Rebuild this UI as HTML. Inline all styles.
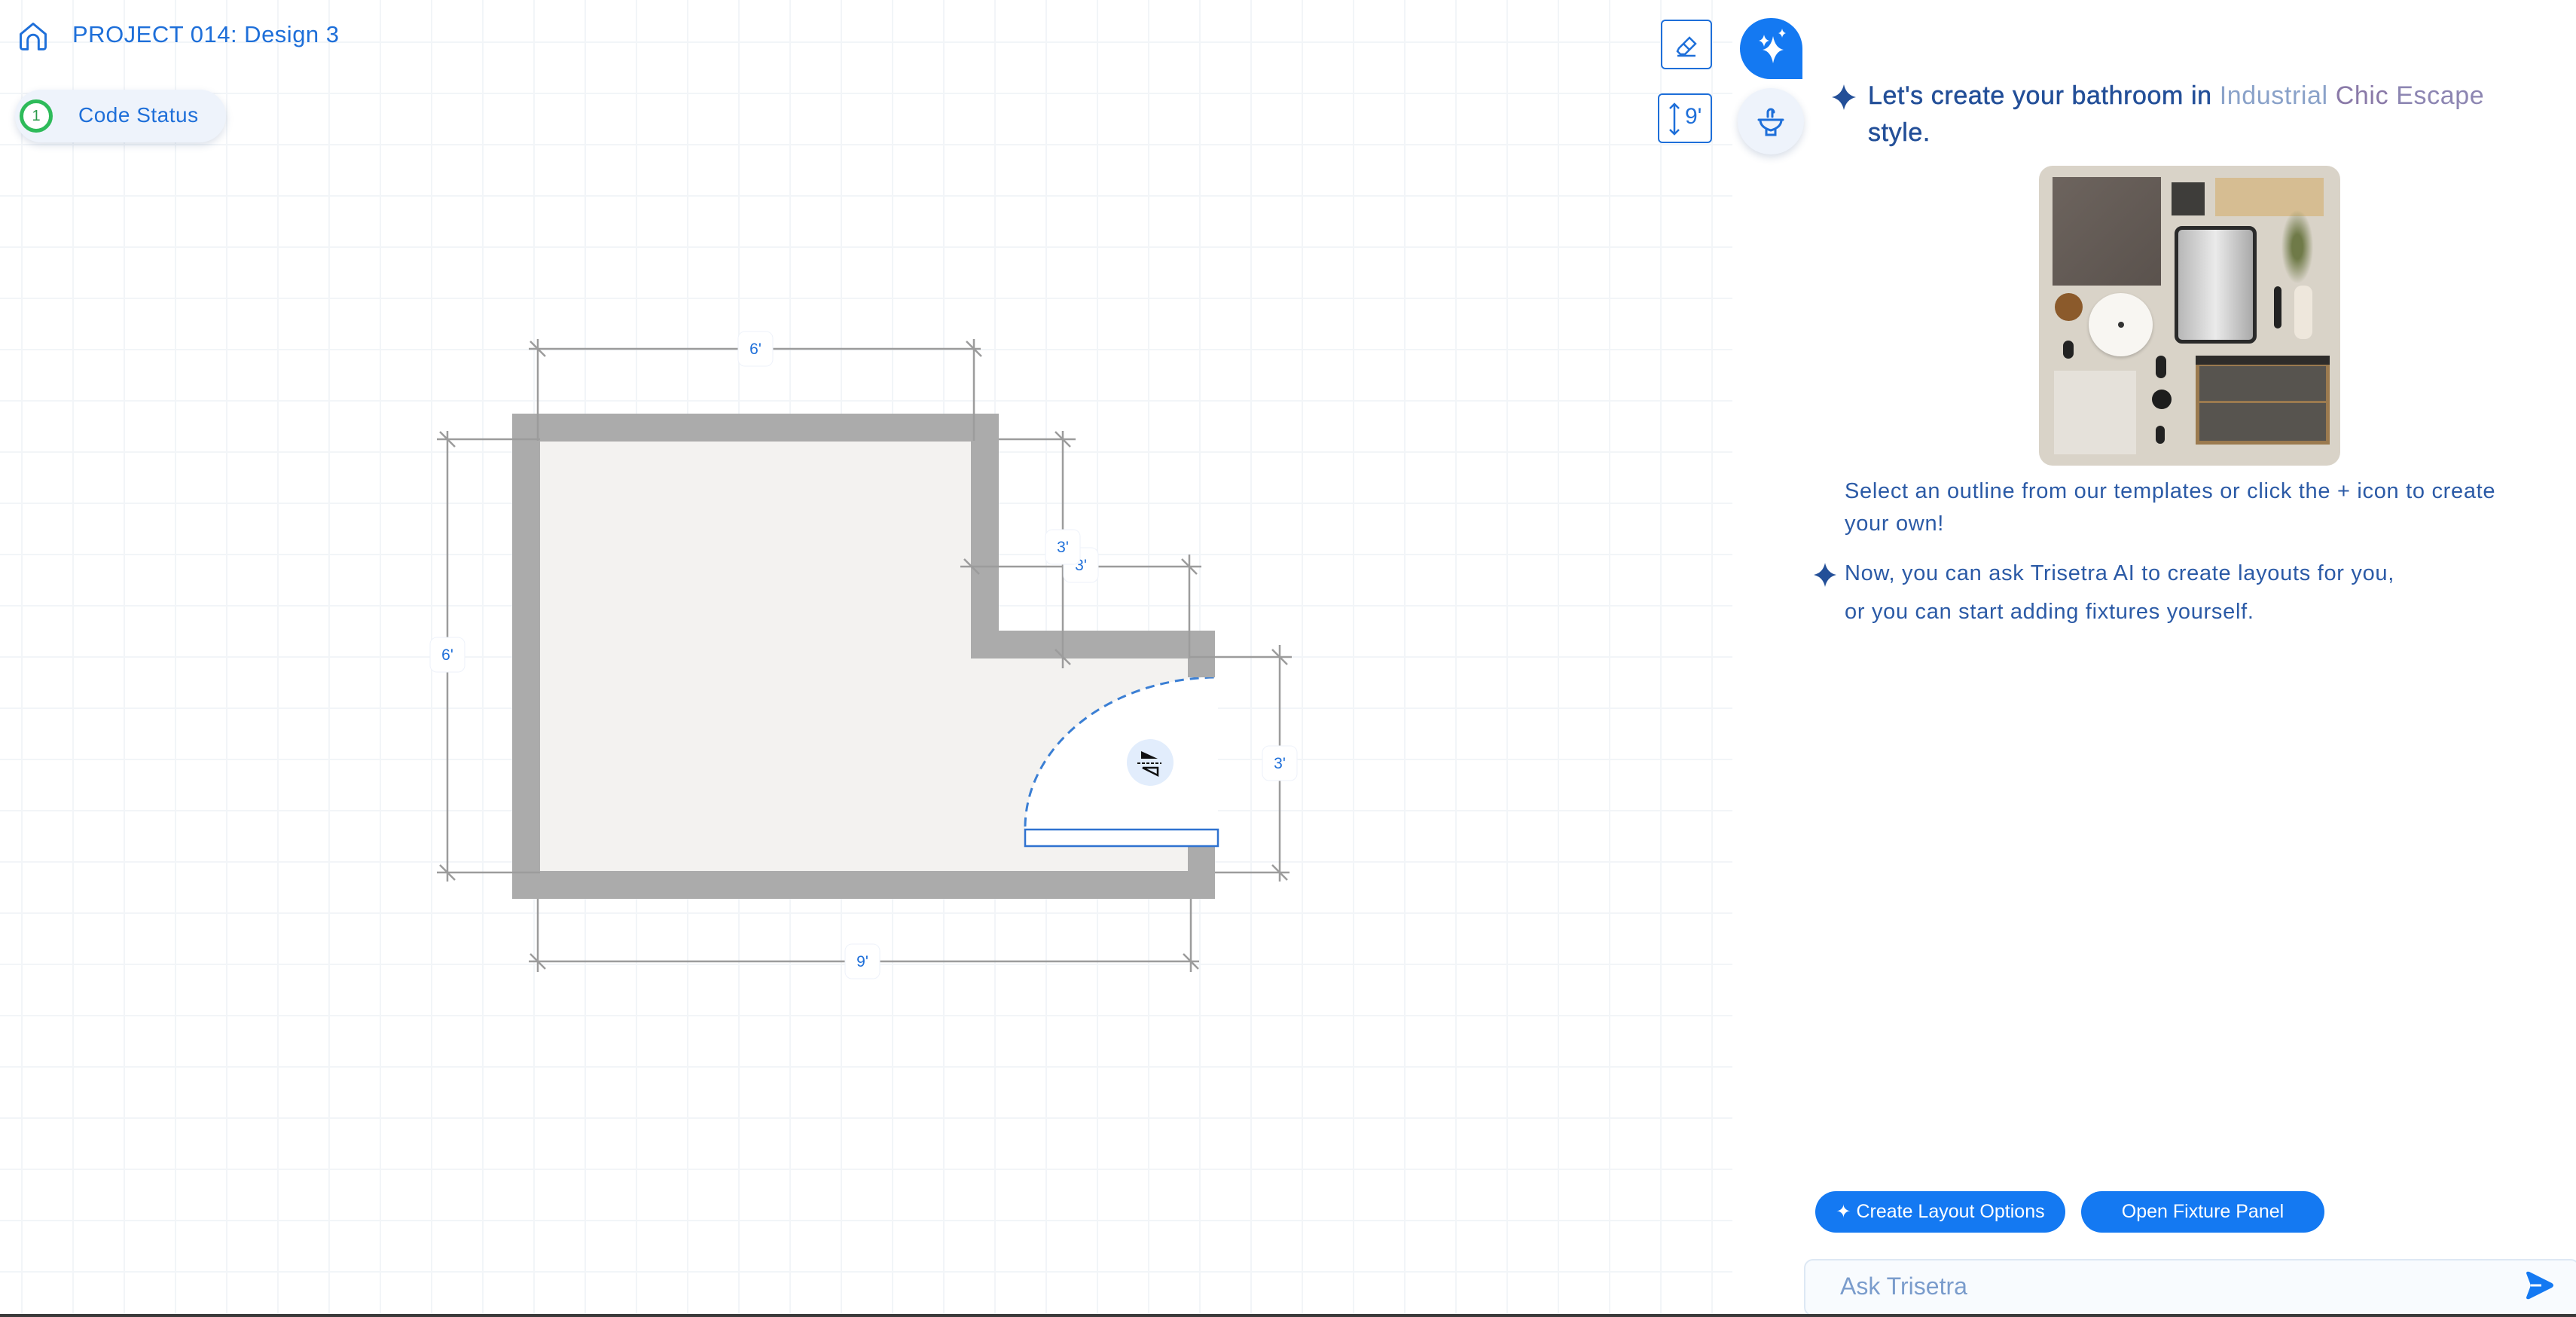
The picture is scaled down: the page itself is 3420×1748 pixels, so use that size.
<!DOCTYPE html>
<html><head><meta charset="utf-8">
<style>
*{margin:0;padding:0;box-sizing:border-box}
body{width:3420px;height:1748px;overflow:hidden;background:#fff;font-family:"Liberation Sans",sans-serif;position:relative}
.canvas{position:absolute;left:0;top:0;width:2300px;height:1748px;
background-image:linear-gradient(#f2f5f8 2px,transparent 2px),linear-gradient(90deg,#f2f5f8 2px,transparent 2px);
background-size:68px 68px;background-position:28px 55px}
.abs{position:absolute}
.title{left:96px;top:28px;font-size:31px;color:#1e6fd9;letter-spacing:0.5px}
.pill{left:20px;top:119px;width:280px;height:70px;border-radius:35px;background:#eef3fb;box-shadow:0 4px 10px rgba(60,90,140,.18)}
.pill .c{position:absolute;left:6px;top:13px;width:44px;height:44px;border:5px solid #2ebb5a;border-radius:50%;background:#fff;color:#2a9a4a;font-size:20px;text-align:center;line-height:34px}
.pill .t{position:absolute;left:84px;top:18px;font-size:28px;color:#1e6fd9;letter-spacing:0.5px}
.tbtn{border:2.5px solid #1e6fd9;border-radius:6px;background:#fff}
.rt{color:#234f98;font-size:34px;letter-spacing:0.6px;-webkit-text-stroke:0.5px #234f98}
.st{color:#2b5aa6;font-size:29px;letter-spacing:0.7px}
.btn{background:#1479f2;color:#fff;border-radius:28px;height:55px;font-size:25px;text-align:center;line-height:55px}
</style></head><body>
<div class="canvas"></div>
<svg class="abs" style="left:22px;top:26px" width="44" height="44" viewBox="0 0 24 24" fill="none" stroke="#1e6fd9" stroke-width="1.6" stroke-linejoin="round"><path d="M3 10.5L12 3l9 7.5V20a1.5 1.5 0 0 1-1.5 1.5H16V15a4 4 0 0 0-8 0v6.5H4.5A1.5 1.5 0 0 1 3 20z"/></svg>
<div class="abs title">PROJECT 014: Design 3</div>
<div class="abs pill"><div class="c">1</div><div class="t">Code Status</div></div>

<svg class="abs" style="left:0;top:0" width="2300" height="1748">
<g fill="#f3f2f0"><rect x="717" y="586" width="572" height="288"/><rect x="717" y="874" width="860" height="282"/></g>
<path d="M1617 1101 L1361 1101 A256 202 0 0 1 1617 899 Z" fill="#fff"/>
<path d="M1361 1097 A256 200 0 0 1 1617 899" fill="none" stroke="#3b7fd4" stroke-width="3" stroke-dasharray="12 8"/>
<g fill="#ababab">
<rect x="680" y="549" width="646" height="37"/><rect x="680" y="549" width="37" height="644"/>
<rect x="1289" y="549" width="37" height="325"/><rect x="1289" y="837" width="324" height="37"/>
<rect x="1577" y="837" width="36" height="62"/><rect x="1577" y="1123" width="36" height="70"/>
<rect x="680" y="1156" width="933" height="37"/></g>
<rect x="1361" y="1101" width="256" height="22" fill="#fff" stroke="#2f72d0" stroke-width="2.5"/>
<g stroke="#9c9c9c" stroke-width="2.5" fill="none">
<path d="M702 463H1302M714 450V585M1293 450V585"/>
<path d="M594 572V1170M580 583H717M580 1158H717"/>
<path d="M1411 572V887M1326 583H1428"/>
<path d="M1275 752H1595M1579 736V874"/>
<path d="M1699 856V1170M1579 872H1715M1613 1158H1712"/>
<path d="M702 1276H1592M714 1193V1290M1581 1193V1290"/>
<path d="M704 453l20 20M1283 453l20 20M584 573l20 20M584 1148l20 20M1401 573l20 20M1401 862l20 20M1280 742l20 20M1569 742l20 20M1689 862l20 20M1689 1148l20 20M704 1266l20 20M1571 1266l20 20"/>
</g>
<g font-family="Liberation Sans" font-size="21" fill="#1e6fd9" text-anchor="middle">
<g><rect x="980" y="440" width="46" height="46" rx="9" fill="#fff" stroke="#eef2fa"/><text x="1003" y="470">6'</text></g>
<g><rect x="571" y="846" width="46" height="46" rx="9" fill="#fff" stroke="#eef2fa"/><text x="594" y="876">6'</text></g>
<g><rect x="1412" y="727" width="46" height="46" rx="9" fill="#fff" stroke="#eef2fa"/><text x="1435" y="757">3'</text></g>
<g><rect x="1388" y="703" width="46" height="46" rx="9" fill="#fff" stroke="#eef2fa"/><text x="1411" y="733">3'</text></g>
<g><rect x="1676" y="990" width="46" height="46" rx="9" fill="#fff" stroke="#eef2fa"/><text x="1699" y="1020">3'</text></g>
<g><rect x="1122" y="1253" width="46" height="46" rx="9" fill="#fff" stroke="#eef2fa"/><text x="1145" y="1283">9'</text></g>
</g>
<circle cx="1527" cy="1012" r="31" fill="#e2edfc"/>
<path d="M1515 997l22 10h-22z" fill="#111"/><path d="M1510 1013h32" stroke="#111" stroke-width="2" stroke-dasharray="4 2"/><path d="M1517 1019l20 10v-10z" fill="none" stroke="#111" stroke-width="2.5"/>
</svg>

<div class="abs tbtn" style="left:2205px;top:26px;width:68px;height:66px">
<svg width="63" height="61" viewBox="0 0 63 61" fill="none" stroke="#1e6fd9" stroke-width="2.5"><path d="M22 36l14-14 8 8-14 14-6 0-4-4z M28 30l8 8 M20 46h24"/></svg></div>
<div class="abs tbtn" style="left:2201px;top:124px;width:72px;height:66px">
<svg class="abs" style="left:10px;top:10px" width="20" height="44" viewBox="0 0 20 44" fill="none" stroke="#1e6fd9" stroke-width="2.5"><path d="M10 2v40M4 8l6-6 6 6M4 36l6 6 6-6"/></svg>
<div class="abs" style="left:34px;top:12px;font-size:30px;color:#1e6fd9">9'</div></div>
<div class="abs" style="left:2310px;top:24px;width:83px;height:81px;background:#1479f2;border-radius:42px 42px 0 42px"></div>
<svg class="abs" style="left:2310px;top:24px" width="83" height="81" viewBox="0 0 83 81" fill="#fff"><path d="M44 24q3 16 14 18q-11 2-14 18q-3-16-14-18q11-2 14-18z"/><path d="M32 22q1.5 7 7 8q-5.5 1-7 8q-1.5-7-7-8q5.5-1 7-8z"/><path d="M56 14q1 5 5 6q-4 1-5 6q-1-5-5-6q4-1 5-6z"/></svg>
<div class="abs" style="left:2307px;top:117px;width:88px;height:88px;border-radius:50%;background:#eef3fb;box-shadow:0 4px 10px rgba(60,90,140,.2)"></div>
<svg class="abs" style="left:2327px;top:137px" width="48" height="48" viewBox="0 0 48 48" fill="none" stroke="#1e6fd9" stroke-width="3" stroke-linecap="round"><path d="M20 18v-6a4 4 0 0 1 8 0M26 10v8M8 22h32M10 22q0 10 14 14q14-4 14-14M18 34v8h12v-8"/></svg>

<svg class="abs" style="left:2432px;top:112px" width="32" height="34" viewBox="0 0 32 34"><path d="M16 0q3 14 16 17q-13 3-16 17q-3-14-16-17q13-3 16-17z" fill="#234f98"/></svg>
<div class="abs rt" style="left:2480px;top:108px">Let's create your bathroom in <span style="color:#8aa2c9;-webkit-text-stroke:0">Industrial </span><span style="color:#8a7aa8;-webkit-text-stroke:0">Chic </span><span style="color:#8d86b2;-webkit-text-stroke:0">Escape</span></div>
<div class="abs rt" style="left:2480px;top:157px">style.</div>

<div class="abs" style="left:2707px;top:220px;width:400px;height:398px;border-radius:18px;background:#d9d3c8;overflow:hidden">
<div class="abs" style="left:18px;top:15px;width:144px;height:144px;background:linear-gradient(135deg,#6d645e,#5a524d)"></div>
<div class="abs" style="left:176px;top:22px;width:44px;height:44px;background:#3e3d3a"></div>
<div class="abs" style="left:234px;top:16px;width:144px;height:51px;background:#d6bd92"></div>
<div class="abs" style="left:180px;top:80px;width:109px;height:156px;border:5px solid #2a2a2a;border-radius:10px;background:linear-gradient(90deg,#b7b7b7,#eaeaea,#a9a9a9)"></div>
<div class="abs" style="left:318px;top:50px;width:50px;height:115px;background:radial-gradient(ellipse at center,#6f7a48 20%,transparent 60%)"></div>
<div class="abs" style="left:339px;top:159px;width:24px;height:71px;border-radius:10px;background:#eee7dc"></div>
<div class="abs" style="left:21px;top:169px;width:37px;height:37px;border-radius:50%;background:#8b5a2b"></div>
<div class="abs" style="left:66px;top:169px;width:85px;height:84px;border-radius:50%;background:#f8f6f2;box-shadow:0 2px 4px rgba(0,0,0,.2)"></div>
<div class="abs" style="left:105px;top:207px;width:8px;height:8px;border-radius:50%;background:#333"></div>
<div class="abs" style="left:32px;top:232px;width:14px;height:24px;border-radius:7px;background:#222"></div>
<div class="abs" style="left:155px;top:252px;width:14px;height:30px;border-radius:7px;background:#222"></div>
<div class="abs" style="left:150px;top:297px;width:26px;height:26px;border-radius:50%;background:#1d1d1d"></div>
<div class="abs" style="left:155px;top:345px;width:12px;height:24px;border-radius:6px;background:#222"></div>
<div class="abs" style="left:312px;top:160px;width:10px;height:56px;border-radius:5px;background:#222"></div>
<div class="abs" style="left:20px;top:272px;width:109px;height:111px;background:#e5e1da"></div>
<div class="abs" style="left:208px;top:252px;width:178px;height:118px;background:#9b7a4f"></div>
<div class="abs" style="left:208px;top:252px;width:178px;height:12px;background:#2e2c2a"></div>
<div class="abs" style="left:213px;top:266px;width:168px;height:46px;background:#57544f"></div>
<div class="abs" style="left:213px;top:315px;width:168px;height:50px;background:#57544f"></div>
</div>

<div class="abs st" style="left:2449px;top:636px">Select an outline from our templates or click the + icon to create</div>
<div class="abs st" style="left:2449px;top:679px">your own!</div>
<svg class="abs" style="left:2408px;top:747px" width="30" height="32" viewBox="0 0 32 34"><path d="M16 0q3 14 16 17q-13 3-16 17q-3-14-16-17q13-3 16-17z" fill="#234f98"/></svg>
<div class="abs st" style="left:2449px;top:745px">Now, you can ask Trisetra AI to create layouts for you,</div>
<div class="abs st" style="left:2449px;top:796px">or you can start adding fixtures yourself.</div>

<div class="abs btn" style="left:2410px;top:1581px;width:332px"><span style="font-size:24px">✦</span> Create Layout Options</div>
<div class="abs btn" style="left:2763px;top:1581px;width:323px">Open Fixture Panel</div>

<div class="abs" style="left:2395px;top:1671px;width:1030px;height:76px;border:2px solid #dde8f4;border-radius:12px;background:#f8fbfe"></div>
<div class="abs" style="left:2443px;top:1689px;font-size:32px;color:#7a9ccc">Ask Trisetra</div>
<svg class="abs" style="left:3350px;top:1686px" width="42" height="40" viewBox="0 0 42 40"><path d="M4 4q0-3 4-2l30 15q4 3 0 6L8 38q-4 1-4-2l6-16z" fill="#1479f2"/><path d="M10 20h14" stroke="#fff" stroke-width="3"/></svg>
<div class="abs" style="left:0;top:1744px;width:3420px;height:4px;background:#3a3a3a"></div>
</body></html>
